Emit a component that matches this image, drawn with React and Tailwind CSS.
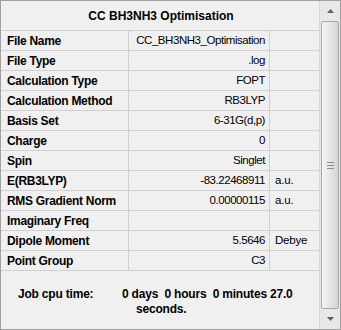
import React from "react";

const rows = [
  ["File Name", "CC_BH3NH3_Optimisation", ""],
  ["File Type", ".log", ""],
  ["Calculation Type", "FOPT", ""],
  ["Calculation Method", "RB3LYP", ""],
  ["Basis Set", "6-31G(d,p)", ""],
  ["Charge", "0", ""],
  ["Spin", "Singlet", ""],
  ["E(RB3LYP)", "-83.22468911", "a.u."],
  ["RMS Gradient Norm", "0.00000115", "a.u."],
  ["Imaginary Freq", "", ""],
  ["Dipole Moment", "5.5646", "Debye"],
  ["Point Group", "C3", ""],
];

export default function App() {
  return (
    <div
      className="w-[341px] h-[330px] bg-[#f0f0f0] border border-[#a0a0a0] flex text-[#000]"
      style={{ fontFamily: '"Liberation Sans", Arial, sans-serif' }}
    >
      <div className="w-[318px] flex flex-col">
        <div className="h-[29px] flex items-center justify-center font-bold text-[12px] pl-[2px]">
          CC BH3NH3 Optimisation
        </div>
        {rows.map(([k, v, u]) => (
          <div key={k} className="h-[20px] flex border-t border-[#d0d0d0]">
            <div className="w-[128px] border-r border-[#d0d0d0] pl-[6px] flex items-center font-bold text-[12px] tracking-[-0.3px]">
              {k}
            </div>
            <div className="w-[141px] border-r border-[#d0d0d0] pr-[4px] flex items-center justify-end text-[11.5px] tracking-[-0.45px]">
              {v}
            </div>
            <div className="flex-1 pl-[5px] flex items-center text-[11.5px] tracking-[-0.2px]">
              {u}
            </div>
          </div>
        ))}
        <div className="border-t border-[#d0d0d0] flex-1 flex pt-[16px] font-bold text-[12px] leading-[15px] tracking-[-0.2px]">
          <div className="w-[121px] pl-[17px]">Job cpu time:</div>
          <div>
            <div className="whitespace-pre">0 days  0 hours  0 minutes 27.0</div>
            <div className="pl-[14px]">seconds.</div>
          </div>
        </div>
      </div>
      <div className="w-[21px] flex flex-col bg-[#e8e8e8] border-l border-[#d8d8d8]">
        <div className="h-[20px] flex items-center justify-center">
          <svg width="7" height="4" viewBox="0 0 7 4">
            <path d="M0 4 L3.5 0 L7 4 Z" fill="#606060" />
          </svg>
        </div>
        <div className="flex-1 mx-[1px] rounded-[2px] border border-[#a8a8a8] bg-gradient-to-r from-[#f4f4f4] via-[#e6e6e6] to-[#d4d4d4] flex items-center justify-center">
          <svg width="7" height="7" viewBox="0 0 7 7">
            <path d="M0 0.5 H7 M0 3.5 H7 M0 6.5 H7" stroke="#8a8a8a" strokeWidth="1" />
          </svg>
        </div>
        <div className="h-[20px] flex items-center justify-center">
          <svg width="7" height="4" viewBox="0 0 7 4">
            <path d="M0 0 L3.5 4 L7 0 Z" fill="#606060" />
          </svg>
        </div>
      </div>
    </div>
  );
}
